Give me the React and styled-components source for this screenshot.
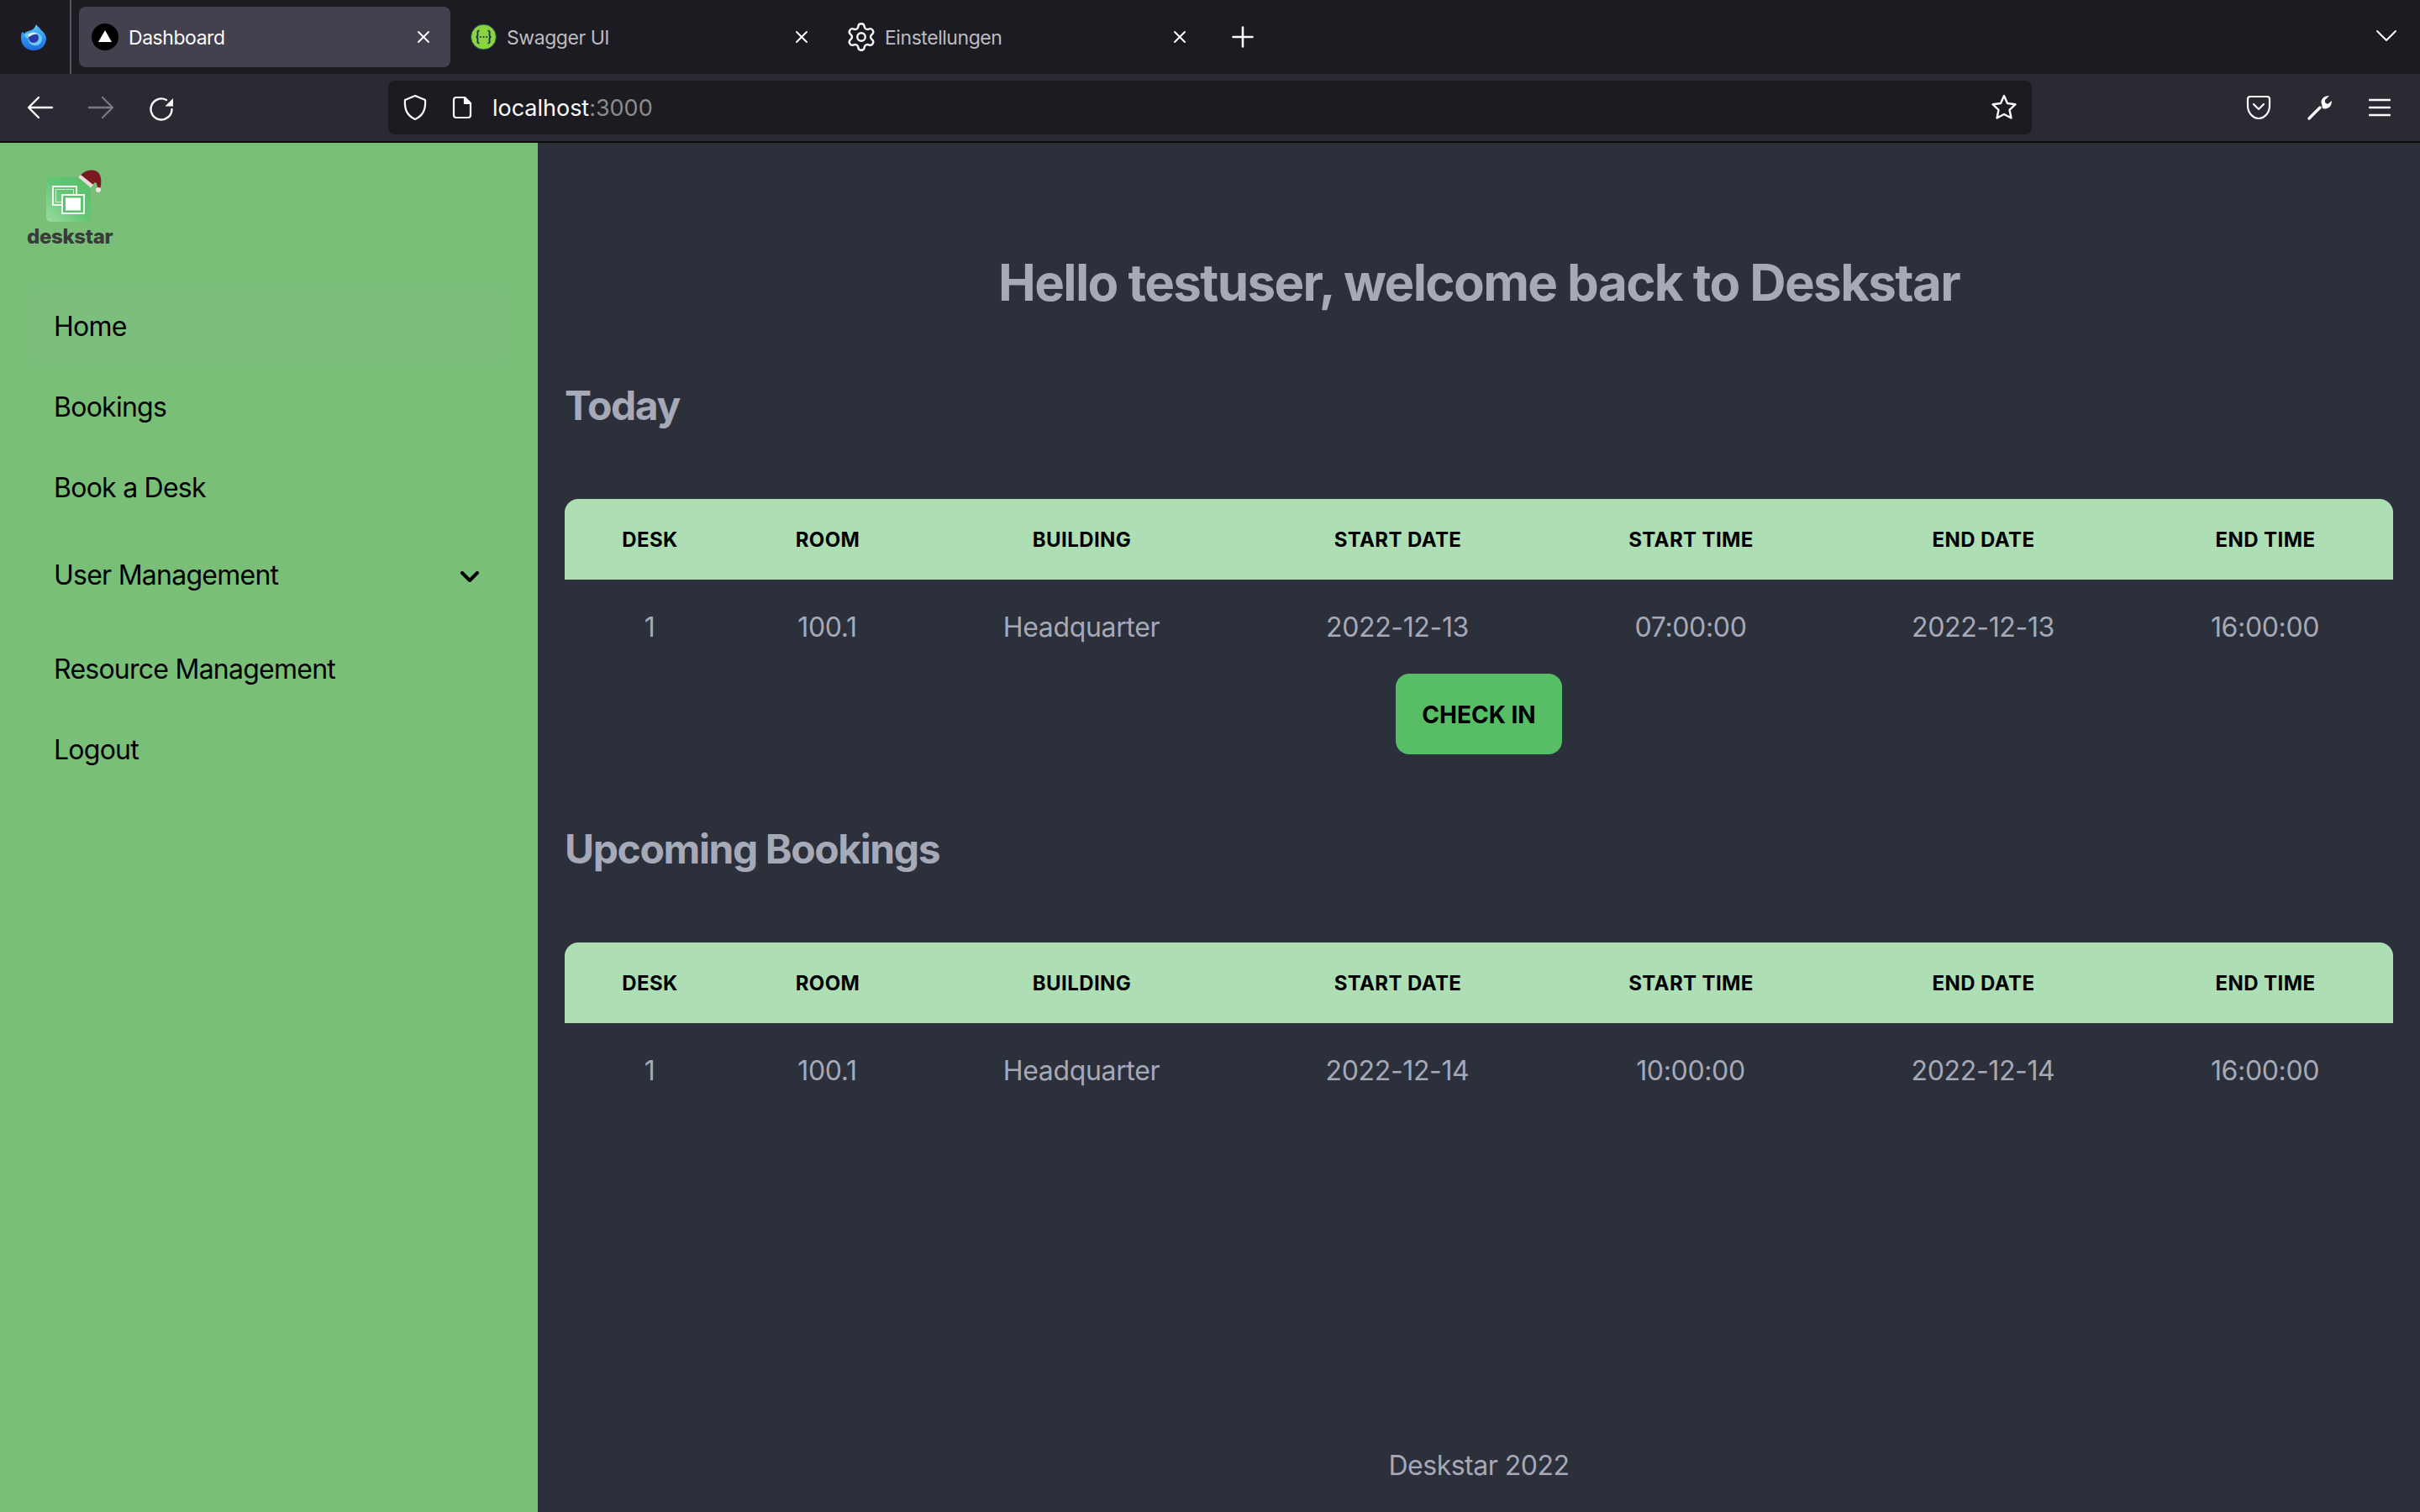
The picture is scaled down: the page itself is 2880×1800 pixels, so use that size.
import React from 'react';
import styled, { createGlobalStyle } from 'styled-components';
import { Settings } from 'lucide-react';

const Global = createGlobalStyle`
  html, body { margin: 0; padding: 0; background: #2c303b; overflow: hidden; }
  * { box-sizing: border-box; }
  #root { width: 2880px; height: 1800px; font-family: Inter, "Liberation Sans", sans-serif; }
`;

const Window = styled.div`
  width: 2880px; height: 1800px; display: flex; flex-direction: column;
`;
const TabBar = styled.div`
  height: 88px; background: #1c1b22; display: flex; align-items: stretch; flex: none;
`;
const AppMenu = styled.div`
  width: 85px; border-right: 2px solid #56555c; display: flex; align-items: center;
  justify-content: center; padding-right: 3px; flex: none;
`;
const Tabs = styled.div`
  display: flex; align-items: center; gap: 8px; padding-left: 9px; flex: 1;
`;
const Tab = styled.div`
  width: 442px; height: 72px; border-radius: 8px; flex: none;
  background: ${p => (p.$active ? '#42414d' : 'transparent')};
  color: ${p => (p.$active ? '#fbfbfe' : '#bcbcc0')};
  display: flex; align-items: center; padding: 0 24px 0 15px;
  font-size: 23px; letter-spacing: -0.45px;
`;
const TabIcon = styled.span`
  width: 32px; height: 32px; flex: none; display: flex; align-items: center; justify-content: center;
`;
const TabTitle = styled.span`
  flex: 1; margin-left: 12px; padding-top: 2px;
`;
const NewTab = styled.span`
  width: 48px; height: 48px; margin-left: 11px; display: flex; align-items: center; justify-content: center; flex: none;
`;
const TabListButton = styled.span`
  width: 40px; height: 40px; margin: 35px 20px 0 0; flex: none; display: flex; justify-content: center;
`;

const Toolbar = styled.div`
  height: 82px; background: #2b2a33; border-bottom: 2px solid #0c0c0d; flex: none;
  display: flex; align-items: flex-start; padding-top: 8px;
`;
const NavButtons = styled.div`
  display: flex; gap: 40px; padding-left: 32px; width: 462px; flex: none; height: 64px; align-items: center;
`;
const UrlBar = styled.div`
  width: 1956px; height: 64px; background: #1c1b22; border-radius: 8px; flex: none;
  display: flex; align-items: center; padding-left: 17px; padding-right: 16px;
`;
const UrlText = styled.div`
  flex: 1; margin-left: 24px; padding-top: 1px; font-size: 27px; color: #fbfbfe; letter-spacing: -0.02px;
`;
const Port = styled.span`
  color: #8b8b90;
`;
const ToolIcons = styled.div`
  display: flex; gap: 42px; padding-left: 255px; height: 64px; align-items: center;
`;
const Ico = styled.svg`
  flex: none; display: block; fill: none; stroke: ${p => p.$c || '#fbfbfe'};
  stroke-width: ${p => p.$w || 2.4}px; stroke-linecap: round; stroke-linejoin: round;
  margin-left: ${p => p.$ml || 0}px;
`;

const Body = styled.div`
  flex: 1; display: flex; min-height: 0;
`;
const Sidebar = styled.aside`
  width: 640px; flex: none; background: #79bf78; padding: 32px 32px 0;
`;
const LogoBlock = styled.div`
  width: 100px; height: 138px; display: flex; flex-direction: column;
`;
const Wordmark = styled.span`
  margin-top: 0; font-size: 24px; line-height: 28px; font-weight: 800; color: #393a3c;
  letter-spacing: -0.35px; text-align: center; white-space: nowrap;
`;
const Menu = styled.nav`
  display: flex; flex-direction: column;
`;
const MenuItem = styled.div`
  height: ${p => (p.$tall ? 112 : 96)}px; margin-bottom: ${p => (p.$tall ? 8 : 0)}px;
  border-radius: 16px; padding: 0 37px 0 32px; display: flex; align-items: center;
  justify-content: space-between; font-size: 32px; color: #000; letter-spacing: -0.75px;
  background: ${p => (p.$active ? '#7cbf7d' : 'transparent')};
`;
const Chevron = styled.svg`
  width: 24px; height: 14px; margin-top: 6px; fill: none; stroke: #000; stroke-width: 4px;
  stroke-linecap: round; stroke-linejoin: round;
`;

const Main = styled.main`
  flex: 1; background: #2c303b; padding: 130px 32px 31px; display: flex; flex-direction: column;
  color: #a5a9b8; min-width: 0;
`;
const Title = styled.h1`
  margin: 0; font-size: 60px; line-height: 72px; font-weight: 700; text-align: center; letter-spacing: -1.6px;
`;
const Section = styled.h2`
  margin: ${p => p.$top}px 0 79px; font-size: 48px; line-height: 64px; font-weight: 700; letter-spacing: -1.4px;
`;
const Table = styled.table`
  width: 2176px; border-collapse: separate; border-spacing: 0; table-layout: fixed; flex: none;
`;
const Th = styled.th`
  height: 96px; padding: 0 0 0 1px; background: #addeb4; color: #000; font-size: 24px; font-weight: 700;
  text-transform: uppercase; text-align: center; letter-spacing: 0.4px;
  &:first-child { border-top-left-radius: 16px; }
  &:last-child { border-top-right-radius: 16px; }
`;
const Td = styled.td`
  height: 112px; padding: 0; text-align: center; font-size: 32px; color: #a5a9b8; letter-spacing: -0.35px;
`;
const CheckIn = styled.button`
  align-self: center; width: 198px; height: 96px; border: 0; border-radius: 16px; background: #57be66;
  color: #000; font-family: inherit; font-size: 28px; font-weight: 700; letter-spacing: 0; flex: none;
  text-transform: uppercase; padding: 1px 0 0;
`;
const Footer = styled.footer`
  margin-top: auto; text-align: center; font-size: 32px; line-height: 48px; color: #a5a9b8; letter-spacing: -0.5px;
`;

const COLS = [202, 221, 384, 368, 330, 366, 305];
const HEAD = ['Desk', 'Room', 'Building', 'Start Date', 'Start Time', 'End Date', 'End Time'];

const BookingTable = ({ row }) => (
  <Table>
    <colgroup>{COLS.map((w, i) => <col key={i} width={w} />)}</colgroup>
    <thead><tr>{HEAD.map(h => <Th key={h}>{h}</Th>)}</tr></thead>
    <tbody><tr>{row.map((c, i) => <Td key={i}>{c}</Td>)}</tr></tbody>
  </Table>
);

const CloseX = () => (
  <Ico width="16" height="16" viewBox="0 0 16 16" $w={2}><path d="M2 2l12 12M14 2L2 14" /></Ico>
);

const FirefoxLogo = () => (
  <svg width="30" height="31" viewBox="0 0 30 31">
    <defs>
      <linearGradient id="ffb" x1="0" y1="0" x2="0" y2="1">
        <stop offset="0" stopColor="#58caf5" /><stop offset="0.55" stopColor="#2f8ef0" /><stop offset="1" stopColor="#1d6bdd" />
      </linearGradient>
    </defs>
    <path d="M1.500 9L4 11C6 8 9 8 12 7C15 6 17 3 18 0C20 3 22 4 24 7C27 9 29 12 30 16C30 25 24 31 15 31C7 31 0 25 0 16C0 13 .5 11 1.500 9Z" fill="url(#ffb)" />
    <path d="M4 12C8 10 12 10 15 9C19 9 25 12 25 17C25 23 20 26 15 25C10 24 8 20 9 17C7 17 5 15 4 12Z" fill="#6cc9f6" />
    <circle cx="15" cy="16" r="6" fill="#2a3aa8" />
    <path d="M8 13C11 9 17 9 20 12C17 11.500 13 12 10 15Z" fill="#d6f1fc" />
  </svg>
);

const NextFavicon = () => (
  <svg width="32" height="32" viewBox="0 0 32 32">
    <circle cx="16" cy="16" r="16" fill="#000" />
    <path d="M16 8 L24 22 H8 Z" fill="#fff" />
  </svg>
);

const SwaggerFavicon = () => (
  <svg width="32" height="32" viewBox="0 0 32 32">
    <circle cx="16.500" cy="16" r="15" fill="#8bd33f" stroke="#1f4a4a" strokeWidth="1" />
    <path d="M11.500 8.500c-3 0-2 2.500-2 4.500s-1 3-2 3c1 0 2 1 2 3s-1 4.500 2 4.500M21.500 8.500c3 0 2 2.500 2 4.500s1 3 2 3c-1 0-2 1-2 3s1 4.500-2 4.500" fill="none" stroke="#173647" strokeWidth="1.800" />
    <circle cx="12.800" cy="16" r="1.100" fill="#173647" />
    <circle cx="16.500" cy="16" r="1.100" fill="#173647" />
    <circle cx="20.200" cy="16" r="1.100" fill="#173647" />
  </svg>
);

const DeskstarLogo = () => (
  <svg width="100" height="66" viewBox="0 0 100 66">
    <defs>
      <linearGradient id="dsg" x1="0" y1="1" x2="1" y2="0">
        <stop offset="0" stopColor="#9adca0" /><stop offset="0.5" stopColor="#63c675" /><stop offset="1" stopColor="#58bf6a" />
      </linearGradient>
    </defs>
    <rect x="23" y="9" width="53" height="53" rx="5" fill="url(#dsg)" />
    <rect x="31" y="20" width="28" height="22" fill="none" stroke="#f0faf1" strokeWidth="2" />
    <rect x="34.500" y="23.500" width="21" height="15" fill="none" stroke="#cdeed2" strokeWidth="1" />
    <rect x="42" y="30" width="26" height="22" fill="#5fc470" stroke="#f5fcf6" strokeWidth="2" />
    <rect x="46" y="33.500" width="18" height="15" fill="#fff" />
    <path d="M62 9C66 2 75 -1 81 1C88 3 90 12 87 23L84 23C84 18 83 15 81 15L76 20Z" fill="#7a1a20" />
    <path d="M61 9L64 6L79 18L76 21.500Z" fill="#ecdcd8" />
    <circle cx="85" cy="24" r="3" fill="#f0e3e0" />
  </svg>
);

export default function App() {
  return (
    <Window>
      <Global />
      <TabBar>
        <AppMenu><FirefoxLogo /></AppMenu>
        <Tabs>
          <Tab $active>
            <TabIcon><NextFavicon /></TabIcon>
            <TabTitle>Dashboard</TabTitle>
            <CloseX />
          </Tab>
          <Tab>
            <TabIcon><SwaggerFavicon /></TabIcon>
            <TabTitle>Swagger UI</TabTitle>
            <CloseX />
          </Tab>
          <Tab>
            <TabIcon><Settings size={38} color="#fbfbfe" strokeWidth={1.5} style={{ flex: 'none' }} /></TabIcon>
            <TabTitle>Einstellungen</TabTitle>
            <CloseX />
          </Tab>
          <NewTab>
            <Ico width="26" height="26" viewBox="0 0 26 26" $w={2.6}><path d="M13 1.500v23M1.500 13h23" /></Ico>
          </NewTab>
        </Tabs>
        <TabListButton>
          <Ico width="26" height="16" viewBox="0 0 26 16" $w={2}><path d="M2 2l11 11L24 2" /></Ico>
        </TabListButton>
      </TabBar>
      <Toolbar>
        <NavButtons>
          <Ico width="32" height="28" viewBox="0 0 32 28"><path d="M30 14H3M14 2L2 14l12 12" /></Ico>
          <Ico width="32" height="28" viewBox="0 0 32 28" $c="#7a797f"><path d="M2 14h27M18 2l12 12-12 12" /></Ico>
          <Ico width="32" height="32" viewBox="0 0 32 32">
            <path d="M28.500 18A12.500 12.500 0 1 1 22 7" />
            <path d="M30 5v9.500h-9.500z" fill="#fbfbfe" stroke="none" />
          </Ico>
        </NavButtons>
        <UrlBar>
          <Ico width="30" height="32" viewBox="0 0 30 32" $w={2.2}><path d="M15 2l12 5c1 11-3 19-12 23C6 26 2 18 3 7z" /></Ico>
          <Ico width="24" height="28" viewBox="0 0 24 28" $ml={29} $w={2.2}>
            <path d="M15 2H5a3 3 0 0 0-3 3v18a3 3 0 0 0 3 3h14a3 3 0 0 0 3-3V9z" />
            <path d="M15 2l7 7h-7z" fill="#fbfbfe" />
          </Ico>
          <UrlText>localhost<Port>:3000</Port></UrlText>
          <Ico width="34" height="34" viewBox="0 0 34 34" $w={2.4}>
            <path d="M17 3l4 9 9.500 1.200-7 6.600 2 9.700L17 25l-8.500 4.500 2-9.700-7-6.600L13 12z" />
          </Ico>
        </UrlBar>
        <ToolIcons>
          <Ico width="30" height="30" viewBox="0 0 30 30" $w={2.2}>
            <path d="M5 2h20a3 3 0 0 1 3 3v8c0 8-6 15-13 15S2 21 2 13V5a3 3 0 0 1 3-3z" /><path d="M9 11l6 6 6-6" />
          </Ico>
          <Ico width="32" height="32" viewBox="0 0 32 32" $w={3.4}>
            <path d="M3 29l13-13" />
            <path d="M18 12c-2-5 2-10 9-10l-5 5v3l3 2 5-4c0 7-5 11-11 9z" fill="#fbfbfe" stroke="none" />
          </Ico>
          <Ico width="26" height="22" viewBox="0 0 26 22"><path d="M1 2h24M1 11h24M1 20h24" /></Ico>
        </ToolIcons>
      </Toolbar>
      <Body>
        <Sidebar>
          <LogoBlock>
            <DeskstarLogo />
            <Wordmark>deskstar</Wordmark>
          </LogoBlock>
          <Menu>
            <MenuItem $active>Home</MenuItem>
            <MenuItem>Bookings</MenuItem>
            <MenuItem>Book a Desk</MenuItem>
            <MenuItem $tall>
              User Management
              <Chevron viewBox="0 0 24 14"><path d="M3 2l9 9 9-9" /></Chevron>
            </MenuItem>
            <MenuItem>Resource Management</MenuItem>
            <MenuItem>Logout</MenuItem>
          </Menu>
        </Sidebar>
        <Main>
          <Title>Hello testuser, welcome back to Deskstar</Title>
          <Section $top={79}>Today</Section>
          <BookingTable row={['1', '100.1', 'Headquarter', '2022-12-13', '07:00:00', '2022-12-13', '16:00:00']} />
          <CheckIn>Check in</CheckIn>
          <Section $top={81}>Upcoming Bookings</Section>
          <BookingTable row={['1', '100.1', 'Headquarter', '2022-12-14', '10:00:00', '2022-12-14', '16:00:00']} />
          <Footer>Deskstar 2022</Footer>
        </Main>
      </Body>
    </Window>
  );
}
